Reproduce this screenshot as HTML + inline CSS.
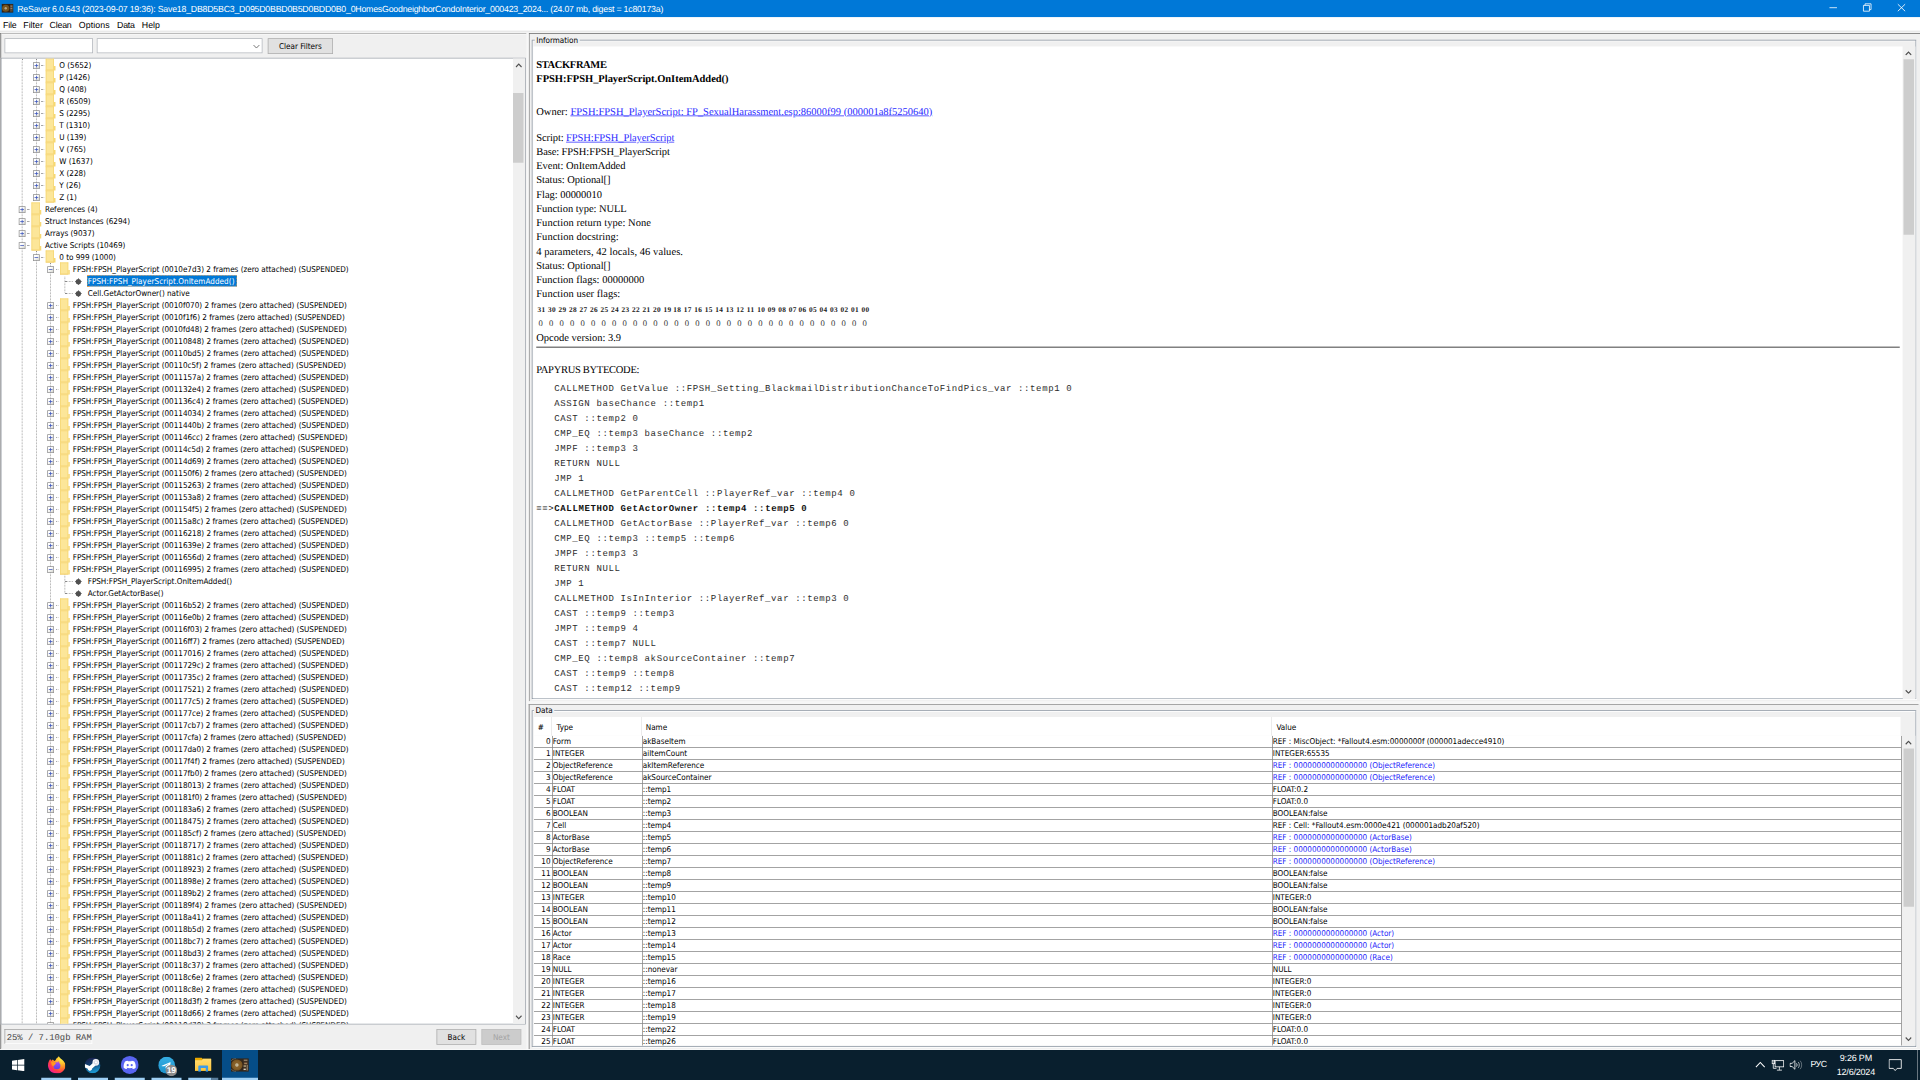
<!DOCTYPE html>
<html lang="en"><head><meta charset="utf-8"><title>ReSaver</title>
<style>

html,body{margin:0;padding:0;overflow:hidden;}
body{width:1920px;height:1080px;overflow:hidden;background:#f0f0f0;position:relative;}
#s{left:0;top:0;width:2560px;height:1440px;transform:scale(0.75);transform-origin:0 0;text-rendering:geometricPrecision;font-family:'DejaVu Sans Condensed','Liberation Sans',sans-serif;font-size:10.73px;color:#000;background:#f0f0f0;}
div,span,a{position:absolute;white-space:nowrap;box-sizing:border-box;}
.tah{font-family:'DejaVu Sans Condensed','Liberation Sans',sans-serif;font-size:10.73px;}
.seg{font-family:'Liberation Sans',sans-serif;}
.ser{font-family:'Liberation Serif',serif;font-size:14px;line-height:19px;height:19px;}
.mon{font-family:'Liberation Mono',monospace;font-size:12px;letter-spacing:0.83px;line-height:20px;height:20px;color:#2c2c2c;}
#titlebar{left:0;top:0;width:2560px;height:23px;background:#0078d7;}
#title{left:23px;top:1px;height:23px;line-height:23px;color:#fff;font-family:'Liberation Sans',sans-serif;font-size:11.73px;letter-spacing:-0.3px;}
#menubar{left:0;top:23px;width:2560px;height:19px;background:#fff;}
.mi{top:1px;height:19px;line-height:19px;font-family:'Liberation Sans',sans-serif;font-size:11.73px;letter-spacing:-0.27px;color:#000;}
.row{left:0;height:16px;line-height:16px;}
.row span.tx{top:0;height:16px;line-height:16px;}
.fold{width:11px;height:16px;background:#fce699;border:0.8px solid #f6d673;border-bottom:1.33px solid #eec452;}
.fold i{position:absolute;left:10px;top:9px;width:2px;height:6px;background:#f7d872;}
.box{width:9px;height:9px;border:1px solid #919191;background:linear-gradient(135deg,#fff 30%,#d8d8d0);}
.box i{position:absolute;left:1px;top:3px;width:5px;height:1px;background:#3b55bd;}
.box b{position:absolute;left:3px;top:1px;width:1px;height:5px;background:#3b55bd;}
.vl{width:0;border-left:1px dotted #8a8a8a;}
.hl{height:0;border-top:1px dotted #8a8a8a;}
.bul{width:7px;height:7px;border-radius:50%;background:#505050;}
.bul:before{content:"";position:absolute;left:3px;top:-1px;width:1px;height:9px;background:#505050;}
.bul:after{content:"";position:absolute;top:3px;left:-1px;height:1px;width:9px;background:#505050;}
.gl{left:712px;width:1823px;height:0;border-top:1.33px solid #848484;}
.cell{height:16px;line-height:16px;}
.blue{color:#2222fa;}
.btn{background:#e1e1e1;border:1px solid #adadad;text-align:center;}
</style></head><body><div id="s">
<div id="titlebar"><svg style="position:absolute;left:1.87px;top:5.2px;width:16px;height:12px" viewBox="0 0 12 9"><rect width="12" height="9" fill="#2e2217"/><circle cx="4.2" cy="4.5" r="3.6" fill="#73521f"/><circle cx="4.2" cy="4.5" r="1.2" fill="#b5a585"/><rect x="8.6" y="1" width="2.6" height="7" fill="#5a4a38"/><rect x="9" y="2" width="1.8" height="0.8" fill="#a09080"/><rect x="9" y="4.2" width="1.8" height="0.8" fill="#a09080"/></svg><span id="title">ReSaver 6.0.643 (2023-09-07 19:36): Save18_DB8D5BC3_D095D0BBD0B5D0BDD0B0_0HomesGoodneighborCondoInterior_000423_2024... (24.07 mb, digest = 1c80173a)</span><svg style="position:absolute;left:2426.67px;top:0;width:133.33px;height:22.67px" viewBox="0 0 100 17"><path d="M9.2 7.7H16.7" stroke="#fff" stroke-width="0.8" fill="none"/><path d="M43.2 5.4H49.2V11.2H43.2ZM44.8 5.4V3.8H50.8V9.6H49.2" stroke="#fff" stroke-width="0.8" fill="none"/><path d="M77.6 4.2L84.9 11.2M84.9 4.2L77.6 11.2" stroke="#fff" stroke-width="0.85" fill="none"/></svg></div>
<div id="menubar"><span class="mi" style="left:4px;letter-spacing:-0.2px">File</span><span class="mi" style="left:31px;letter-spacing:0.03px">Filter</span><span class="mi" style="left:66px;letter-spacing:-0.24px">Clean</span><span class="mi" style="left:105px;letter-spacing:0.13px">Options</span><span class="mi" style="left:156px;letter-spacing:-0.27px">Data</span><span class="mi" style="left:189px;letter-spacing:0.07px">Help</span></div>
<div style="left:0;top:41px;width:2560px;height:1px;background:#dadada"></div><div style="left:0;top:43px;width:2560px;height:1px;background:#f4f4f4"></div><div style="left:0;top:44px;width:702px;height:1px;background:#8e8e8e"></div><div style="left:0;top:45px;width:702px;height:1px;background:#fbfbfb"></div><div style="left:0;top:44px;width:1px;height:1355px;background:#6b6b6b"></div><div style="left:1px;top:45px;width:1px;height:1353px;background:#b9b9b9"></div><div style="left:705px;top:44px;width:1855px;height:1px;background:#696969"></div><div style="left:705px;top:44px;width:1px;height:891px;background:#696969"></div><div style="left:702px;top:44px;width:3px;height:1356px;background:#f7f7f7"></div><div style="left:6px;top:51px;width:118px;height:20px;background:#fff;border:1px solid #aeb2b8"></div><div style="left:129px;top:51px;width:221px;height:20px;background:#fff;border:1px solid #aeb2b8"><svg style="position:absolute;left:206.67px;top:6.67px;width:10.67px;height:6.67px" viewBox="0 0 8 5"><path d="M0.8 0.8L3.7 3.8L6.6 0.8" stroke="#555" stroke-width="0.8" fill="none"/></svg></div><div class="btn tah" style="left:357px;top:51px;width:87px;height:21px;line-height:19px">Clear Filters</div>
<div id="tree" style="left:1px;top:77px;width:700px;height:1289px;background:#fff;border:1px solid #9aa0a8;overflow:hidden"></div>
<div id="treeclip" style="left:2px;top:78px;width:682px;height:1287px;overflow:hidden"><div class="vl" style="left:27px;top:0px;height:1288px"></div><div class="vl" style="left:46px;top:0px;height:184px"></div><div class="vl" style="left:46px;top:256px;height:1032px"></div><div class="vl" style="left:65px;top:272px;height:1016px"></div><div class="vl" style="left:84px;top:288px;height:24px"></div><div class="vl" style="left:84px;top:688px;height:25px"></div><div class="row" style="top:1px"><div class="hl" style="left:53px;top:8px;width:4px;border-top-color:#a8a8a8"></div><div class="box" style="left:42px;top:4px"><i></i><b></b></div><div class="fold" style="left:59px;top:-1px"><i></i></div><span class="tx" style="left:77px">O (5652)</span></div>
<div class="row" style="top:17px"><div class="hl" style="left:53px;top:8px;width:4px;border-top-color:#a8a8a8"></div><div class="box" style="left:42px;top:4px"><i></i><b></b></div><div class="fold" style="left:59px;top:-1px"><i></i></div><span class="tx" style="left:77px">P (1426)</span></div>
<div class="row" style="top:33px"><div class="hl" style="left:53px;top:8px;width:4px;border-top-color:#a8a8a8"></div><div class="box" style="left:42px;top:4px"><i></i><b></b></div><div class="fold" style="left:59px;top:-1px"><i></i></div><span class="tx" style="left:77px">Q (408)</span></div>
<div class="row" style="top:49px"><div class="hl" style="left:53px;top:8px;width:4px;border-top-color:#a8a8a8"></div><div class="box" style="left:42px;top:4px"><i></i><b></b></div><div class="fold" style="left:59px;top:-1px"><i></i></div><span class="tx" style="left:77px">R (6509)</span></div>
<div class="row" style="top:65px"><div class="hl" style="left:53px;top:8px;width:4px;border-top-color:#a8a8a8"></div><div class="box" style="left:42px;top:4px"><i></i><b></b></div><div class="fold" style="left:59px;top:-1px"><i></i></div><span class="tx" style="left:77px">S (2295)</span></div>
<div class="row" style="top:81px"><div class="hl" style="left:53px;top:8px;width:4px;border-top-color:#a8a8a8"></div><div class="box" style="left:42px;top:4px"><i></i><b></b></div><div class="fold" style="left:59px;top:-1px"><i></i></div><span class="tx" style="left:77px">T (1310)</span></div>
<div class="row" style="top:97px"><div class="hl" style="left:53px;top:8px;width:4px;border-top-color:#a8a8a8"></div><div class="box" style="left:42px;top:4px"><i></i><b></b></div><div class="fold" style="left:59px;top:-1px"><i></i></div><span class="tx" style="left:77px">U (139)</span></div>
<div class="row" style="top:113px"><div class="hl" style="left:53px;top:8px;width:4px;border-top-color:#a8a8a8"></div><div class="box" style="left:42px;top:4px"><i></i><b></b></div><div class="fold" style="left:59px;top:-1px"><i></i></div><span class="tx" style="left:77px">V (765)</span></div>
<div class="row" style="top:129px"><div class="hl" style="left:53px;top:8px;width:4px;border-top-color:#a8a8a8"></div><div class="box" style="left:42px;top:4px"><i></i><b></b></div><div class="fold" style="left:59px;top:-1px"><i></i></div><span class="tx" style="left:77px">W (1637)</span></div>
<div class="row" style="top:145px"><div class="hl" style="left:53px;top:8px;width:4px;border-top-color:#a8a8a8"></div><div class="box" style="left:42px;top:4px"><i></i><b></b></div><div class="fold" style="left:59px;top:-1px"><i></i></div><span class="tx" style="left:77px">X (228)</span></div>
<div class="row" style="top:161px"><div class="hl" style="left:53px;top:8px;width:4px;border-top-color:#a8a8a8"></div><div class="box" style="left:42px;top:4px"><i></i><b></b></div><div class="fold" style="left:59px;top:-1px"><i></i></div><span class="tx" style="left:77px">Y (26)</span></div>
<div class="row" style="top:177px"><div class="hl" style="left:53px;top:8px;width:4px;border-top-color:#a8a8a8"></div><div class="box" style="left:42px;top:4px"><i></i><b></b></div><div class="fold" style="left:59px;top:-1px"><i></i></div><span class="tx" style="left:77px">Z (1)</span></div>
<div class="row" style="top:193px"><div class="hl" style="left:34px;top:8px;width:4px;border-top-color:#a8a8a8"></div><div class="box" style="left:23px;top:4px"><i></i><b></b></div><div class="fold" style="left:40px;top:-1px"><i></i></div><span class="tx" style="left:58px">References (4)</span></div>
<div class="row" style="top:209px"><div class="hl" style="left:34px;top:8px;width:4px;border-top-color:#a8a8a8"></div><div class="box" style="left:23px;top:4px"><i></i><b></b></div><div class="fold" style="left:40px;top:-1px"><i></i></div><span class="tx" style="left:58px">Struct Instances (6294)</span></div>
<div class="row" style="top:225px"><div class="hl" style="left:34px;top:8px;width:4px;border-top-color:#a8a8a8"></div><div class="box" style="left:23px;top:4px"><i></i><b></b></div><div class="fold" style="left:40px;top:-1px"><i></i></div><span class="tx" style="left:58px">Arrays (9037)</span></div>
<div class="row" style="top:241px"><div class="hl" style="left:34px;top:8px;width:4px;border-top-color:#a8a8a8"></div><div class="box" style="left:23px;top:4px"><i></i></div><div class="fold" style="left:40px;top:-1px"><i></i></div><span class="tx" style="left:58px">Active Scripts (10469)</span></div>
<div class="row" style="top:257px"><div class="hl" style="left:53px;top:8px;width:4px;border-top-color:#a8a8a8"></div><div class="box" style="left:42px;top:4px"><i></i></div><div class="fold" style="left:59px;top:-1px"><i></i></div><span class="tx" style="left:77px">0 to 999 (1000)</span></div>
<div class="row" style="top:273px"><div class="hl" style="left:72px;top:8px;width:4px;border-top-color:#a8a8a8"></div><div class="box" style="left:61px;top:4px"><i></i></div><div class="fold" style="left:78px;top:-1px"><i></i></div><span class="tx" style="left:95px">FPSH:FPSH_PlayerScript (0010e7d3) 2 frames (zero attached) (SUSPENDED)</span></div>
<div class="row" style="top:289px"><div class="hl" style="left:85px;top:8px;width:10px"></div><div class="bul" style="left:99px;top:5px"></div><span class="tx" style="left:114px;top:0px;height:15px;line-height:15px;width:200px;background:#0078d7;color:#fff;border:1px dotted #e8a050;padding-left:0;letter-spacing:0.09px">FPSH:FPSH_PlayerScript.OnItemAdded()</span></div>
<div class="row" style="top:305px"><div class="hl" style="left:85px;top:8px;width:10px"></div><div class="bul" style="left:99px;top:5px"></div><span class="tx" style="left:115px">Cell.GetActorOwner() native</span></div>
<div class="row" style="top:321px"><div class="hl" style="left:72px;top:8px;width:4px;border-top-color:#a8a8a8"></div><div class="box" style="left:61px;top:4px"><i></i><b></b></div><div class="fold" style="left:78px;top:-1px"><i></i></div><span class="tx" style="left:95px">FPSH:FPSH_PlayerScript (0010f070) 2 frames (zero attached) (SUSPENDED)</span></div>
<div class="row" style="top:337px"><div class="hl" style="left:72px;top:8px;width:4px;border-top-color:#a8a8a8"></div><div class="box" style="left:61px;top:4px"><i></i><b></b></div><div class="fold" style="left:78px;top:-1px"><i></i></div><span class="tx" style="left:95px">FPSH:FPSH_PlayerScript (0010f1f6) 2 frames (zero attached) (SUSPENDED)</span></div>
<div class="row" style="top:353px"><div class="hl" style="left:72px;top:8px;width:4px;border-top-color:#a8a8a8"></div><div class="box" style="left:61px;top:4px"><i></i><b></b></div><div class="fold" style="left:78px;top:-1px"><i></i></div><span class="tx" style="left:95px">FPSH:FPSH_PlayerScript (0010fd48) 2 frames (zero attached) (SUSPENDED)</span></div>
<div class="row" style="top:369px"><div class="hl" style="left:72px;top:8px;width:4px;border-top-color:#a8a8a8"></div><div class="box" style="left:61px;top:4px"><i></i><b></b></div><div class="fold" style="left:78px;top:-1px"><i></i></div><span class="tx" style="left:95px">FPSH:FPSH_PlayerScript (00110848) 2 frames (zero attached) (SUSPENDED)</span></div>
<div class="row" style="top:385px"><div class="hl" style="left:72px;top:8px;width:4px;border-top-color:#a8a8a8"></div><div class="box" style="left:61px;top:4px"><i></i><b></b></div><div class="fold" style="left:78px;top:-1px"><i></i></div><span class="tx" style="left:95px">FPSH:FPSH_PlayerScript (00110bd5) 2 frames (zero attached) (SUSPENDED)</span></div>
<div class="row" style="top:401px"><div class="hl" style="left:72px;top:8px;width:4px;border-top-color:#a8a8a8"></div><div class="box" style="left:61px;top:4px"><i></i><b></b></div><div class="fold" style="left:78px;top:-1px"><i></i></div><span class="tx" style="left:95px">FPSH:FPSH_PlayerScript (00110c5f) 2 frames (zero attached) (SUSPENDED)</span></div>
<div class="row" style="top:417px"><div class="hl" style="left:72px;top:8px;width:4px;border-top-color:#a8a8a8"></div><div class="box" style="left:61px;top:4px"><i></i><b></b></div><div class="fold" style="left:78px;top:-1px"><i></i></div><span class="tx" style="left:95px">FPSH:FPSH_PlayerScript (0011157a) 2 frames (zero attached) (SUSPENDED)</span></div>
<div class="row" style="top:433px"><div class="hl" style="left:72px;top:8px;width:4px;border-top-color:#a8a8a8"></div><div class="box" style="left:61px;top:4px"><i></i><b></b></div><div class="fold" style="left:78px;top:-1px"><i></i></div><span class="tx" style="left:95px">FPSH:FPSH_PlayerScript (001132e4) 2 frames (zero attached) (SUSPENDED)</span></div>
<div class="row" style="top:449px"><div class="hl" style="left:72px;top:8px;width:4px;border-top-color:#a8a8a8"></div><div class="box" style="left:61px;top:4px"><i></i><b></b></div><div class="fold" style="left:78px;top:-1px"><i></i></div><span class="tx" style="left:95px">FPSH:FPSH_PlayerScript (001136c4) 2 frames (zero attached) (SUSPENDED)</span></div>
<div class="row" style="top:465px"><div class="hl" style="left:72px;top:8px;width:4px;border-top-color:#a8a8a8"></div><div class="box" style="left:61px;top:4px"><i></i><b></b></div><div class="fold" style="left:78px;top:-1px"><i></i></div><span class="tx" style="left:95px">FPSH:FPSH_PlayerScript (00114034) 2 frames (zero attached) (SUSPENDED)</span></div>
<div class="row" style="top:481px"><div class="hl" style="left:72px;top:8px;width:4px;border-top-color:#a8a8a8"></div><div class="box" style="left:61px;top:4px"><i></i><b></b></div><div class="fold" style="left:78px;top:-1px"><i></i></div><span class="tx" style="left:95px">FPSH:FPSH_PlayerScript (0011440b) 2 frames (zero attached) (SUSPENDED)</span></div>
<div class="row" style="top:497px"><div class="hl" style="left:72px;top:8px;width:4px;border-top-color:#a8a8a8"></div><div class="box" style="left:61px;top:4px"><i></i><b></b></div><div class="fold" style="left:78px;top:-1px"><i></i></div><span class="tx" style="left:95px">FPSH:FPSH_PlayerScript (001146cc) 2 frames (zero attached) (SUSPENDED)</span></div>
<div class="row" style="top:513px"><div class="hl" style="left:72px;top:8px;width:4px;border-top-color:#a8a8a8"></div><div class="box" style="left:61px;top:4px"><i></i><b></b></div><div class="fold" style="left:78px;top:-1px"><i></i></div><span class="tx" style="left:95px">FPSH:FPSH_PlayerScript (00114c5d) 2 frames (zero attached) (SUSPENDED)</span></div>
<div class="row" style="top:529px"><div class="hl" style="left:72px;top:8px;width:4px;border-top-color:#a8a8a8"></div><div class="box" style="left:61px;top:4px"><i></i><b></b></div><div class="fold" style="left:78px;top:-1px"><i></i></div><span class="tx" style="left:95px">FPSH:FPSH_PlayerScript (00114d69) 2 frames (zero attached) (SUSPENDED)</span></div>
<div class="row" style="top:545px"><div class="hl" style="left:72px;top:8px;width:4px;border-top-color:#a8a8a8"></div><div class="box" style="left:61px;top:4px"><i></i><b></b></div><div class="fold" style="left:78px;top:-1px"><i></i></div><span class="tx" style="left:95px">FPSH:FPSH_PlayerScript (001150f6) 2 frames (zero attached) (SUSPENDED)</span></div>
<div class="row" style="top:561px"><div class="hl" style="left:72px;top:8px;width:4px;border-top-color:#a8a8a8"></div><div class="box" style="left:61px;top:4px"><i></i><b></b></div><div class="fold" style="left:78px;top:-1px"><i></i></div><span class="tx" style="left:95px">FPSH:FPSH_PlayerScript (00115263) 2 frames (zero attached) (SUSPENDED)</span></div>
<div class="row" style="top:577px"><div class="hl" style="left:72px;top:8px;width:4px;border-top-color:#a8a8a8"></div><div class="box" style="left:61px;top:4px"><i></i><b></b></div><div class="fold" style="left:78px;top:-1px"><i></i></div><span class="tx" style="left:95px">FPSH:FPSH_PlayerScript (001153a8) 2 frames (zero attached) (SUSPENDED)</span></div>
<div class="row" style="top:593px"><div class="hl" style="left:72px;top:8px;width:4px;border-top-color:#a8a8a8"></div><div class="box" style="left:61px;top:4px"><i></i><b></b></div><div class="fold" style="left:78px;top:-1px"><i></i></div><span class="tx" style="left:95px">FPSH:FPSH_PlayerScript (001154f5) 2 frames (zero attached) (SUSPENDED)</span></div>
<div class="row" style="top:609px"><div class="hl" style="left:72px;top:8px;width:4px;border-top-color:#a8a8a8"></div><div class="box" style="left:61px;top:4px"><i></i><b></b></div><div class="fold" style="left:78px;top:-1px"><i></i></div><span class="tx" style="left:95px">FPSH:FPSH_PlayerScript (00115a8c) 2 frames (zero attached) (SUSPENDED)</span></div>
<div class="row" style="top:625px"><div class="hl" style="left:72px;top:8px;width:4px;border-top-color:#a8a8a8"></div><div class="box" style="left:61px;top:4px"><i></i><b></b></div><div class="fold" style="left:78px;top:-1px"><i></i></div><span class="tx" style="left:95px">FPSH:FPSH_PlayerScript (00116218) 2 frames (zero attached) (SUSPENDED)</span></div>
<div class="row" style="top:641px"><div class="hl" style="left:72px;top:8px;width:4px;border-top-color:#a8a8a8"></div><div class="box" style="left:61px;top:4px"><i></i><b></b></div><div class="fold" style="left:78px;top:-1px"><i></i></div><span class="tx" style="left:95px">FPSH:FPSH_PlayerScript (0011639e) 2 frames (zero attached) (SUSPENDED)</span></div>
<div class="row" style="top:657px"><div class="hl" style="left:72px;top:8px;width:4px;border-top-color:#a8a8a8"></div><div class="box" style="left:61px;top:4px"><i></i><b></b></div><div class="fold" style="left:78px;top:-1px"><i></i></div><span class="tx" style="left:95px">FPSH:FPSH_PlayerScript (0011656d) 2 frames (zero attached) (SUSPENDED)</span></div>
<div class="row" style="top:673px"><div class="hl" style="left:72px;top:8px;width:4px;border-top-color:#a8a8a8"></div><div class="box" style="left:61px;top:4px"><i></i></div><div class="fold" style="left:78px;top:-1px"><i></i></div><span class="tx" style="left:95px">FPSH:FPSH_PlayerScript (00116995) 2 frames (zero attached) (SUSPENDED)</span></div>
<div class="row" style="top:689px"><div class="hl" style="left:85px;top:8px;width:10px"></div><div class="bul" style="left:99px;top:5px"></div><span class="tx" style="left:115px">FPSH:FPSH_PlayerScript.OnItemAdded()</span></div>
<div class="row" style="top:705px"><div class="hl" style="left:85px;top:8px;width:10px"></div><div class="bul" style="left:99px;top:5px"></div><span class="tx" style="left:115px">Actor.GetActorBase()</span></div>
<div class="row" style="top:721px"><div class="hl" style="left:72px;top:8px;width:4px;border-top-color:#a8a8a8"></div><div class="box" style="left:61px;top:4px"><i></i><b></b></div><div class="fold" style="left:78px;top:-1px"><i></i></div><span class="tx" style="left:95px">FPSH:FPSH_PlayerScript (00116b52) 2 frames (zero attached) (SUSPENDED)</span></div>
<div class="row" style="top:737px"><div class="hl" style="left:72px;top:8px;width:4px;border-top-color:#a8a8a8"></div><div class="box" style="left:61px;top:4px"><i></i><b></b></div><div class="fold" style="left:78px;top:-1px"><i></i></div><span class="tx" style="left:95px">FPSH:FPSH_PlayerScript (00116e0b) 2 frames (zero attached) (SUSPENDED)</span></div>
<div class="row" style="top:753px"><div class="hl" style="left:72px;top:8px;width:4px;border-top-color:#a8a8a8"></div><div class="box" style="left:61px;top:4px"><i></i><b></b></div><div class="fold" style="left:78px;top:-1px"><i></i></div><span class="tx" style="left:95px">FPSH:FPSH_PlayerScript (00116f03) 2 frames (zero attached) (SUSPENDED)</span></div>
<div class="row" style="top:769px"><div class="hl" style="left:72px;top:8px;width:4px;border-top-color:#a8a8a8"></div><div class="box" style="left:61px;top:4px"><i></i><b></b></div><div class="fold" style="left:78px;top:-1px"><i></i></div><span class="tx" style="left:95px">FPSH:FPSH_PlayerScript (00116ff7) 2 frames (zero attached) (SUSPENDED)</span></div>
<div class="row" style="top:785px"><div class="hl" style="left:72px;top:8px;width:4px;border-top-color:#a8a8a8"></div><div class="box" style="left:61px;top:4px"><i></i><b></b></div><div class="fold" style="left:78px;top:-1px"><i></i></div><span class="tx" style="left:95px">FPSH:FPSH_PlayerScript (00117016) 2 frames (zero attached) (SUSPENDED)</span></div>
<div class="row" style="top:801px"><div class="hl" style="left:72px;top:8px;width:4px;border-top-color:#a8a8a8"></div><div class="box" style="left:61px;top:4px"><i></i><b></b></div><div class="fold" style="left:78px;top:-1px"><i></i></div><span class="tx" style="left:95px">FPSH:FPSH_PlayerScript (0011729c) 2 frames (zero attached) (SUSPENDED)</span></div>
<div class="row" style="top:817px"><div class="hl" style="left:72px;top:8px;width:4px;border-top-color:#a8a8a8"></div><div class="box" style="left:61px;top:4px"><i></i><b></b></div><div class="fold" style="left:78px;top:-1px"><i></i></div><span class="tx" style="left:95px">FPSH:FPSH_PlayerScript (0011735c) 2 frames (zero attached) (SUSPENDED)</span></div>
<div class="row" style="top:833px"><div class="hl" style="left:72px;top:8px;width:4px;border-top-color:#a8a8a8"></div><div class="box" style="left:61px;top:4px"><i></i><b></b></div><div class="fold" style="left:78px;top:-1px"><i></i></div><span class="tx" style="left:95px">FPSH:FPSH_PlayerScript (00117521) 2 frames (zero attached) (SUSPENDED)</span></div>
<div class="row" style="top:849px"><div class="hl" style="left:72px;top:8px;width:4px;border-top-color:#a8a8a8"></div><div class="box" style="left:61px;top:4px"><i></i><b></b></div><div class="fold" style="left:78px;top:-1px"><i></i></div><span class="tx" style="left:95px">FPSH:FPSH_PlayerScript (001177c5) 2 frames (zero attached) (SUSPENDED)</span></div>
<div class="row" style="top:865px"><div class="hl" style="left:72px;top:8px;width:4px;border-top-color:#a8a8a8"></div><div class="box" style="left:61px;top:4px"><i></i><b></b></div><div class="fold" style="left:78px;top:-1px"><i></i></div><span class="tx" style="left:95px">FPSH:FPSH_PlayerScript (001177ce) 2 frames (zero attached) (SUSPENDED)</span></div>
<div class="row" style="top:881px"><div class="hl" style="left:72px;top:8px;width:4px;border-top-color:#a8a8a8"></div><div class="box" style="left:61px;top:4px"><i></i><b></b></div><div class="fold" style="left:78px;top:-1px"><i></i></div><span class="tx" style="left:95px">FPSH:FPSH_PlayerScript (00117cb7) 2 frames (zero attached) (SUSPENDED)</span></div>
<div class="row" style="top:897px"><div class="hl" style="left:72px;top:8px;width:4px;border-top-color:#a8a8a8"></div><div class="box" style="left:61px;top:4px"><i></i><b></b></div><div class="fold" style="left:78px;top:-1px"><i></i></div><span class="tx" style="left:95px">FPSH:FPSH_PlayerScript (00117cfa) 2 frames (zero attached) (SUSPENDED)</span></div>
<div class="row" style="top:913px"><div class="hl" style="left:72px;top:8px;width:4px;border-top-color:#a8a8a8"></div><div class="box" style="left:61px;top:4px"><i></i><b></b></div><div class="fold" style="left:78px;top:-1px"><i></i></div><span class="tx" style="left:95px">FPSH:FPSH_PlayerScript (00117da0) 2 frames (zero attached) (SUSPENDED)</span></div>
<div class="row" style="top:929px"><div class="hl" style="left:72px;top:8px;width:4px;border-top-color:#a8a8a8"></div><div class="box" style="left:61px;top:4px"><i></i><b></b></div><div class="fold" style="left:78px;top:-1px"><i></i></div><span class="tx" style="left:95px">FPSH:FPSH_PlayerScript (00117f4f) 2 frames (zero attached) (SUSPENDED)</span></div>
<div class="row" style="top:945px"><div class="hl" style="left:72px;top:8px;width:4px;border-top-color:#a8a8a8"></div><div class="box" style="left:61px;top:4px"><i></i><b></b></div><div class="fold" style="left:78px;top:-1px"><i></i></div><span class="tx" style="left:95px">FPSH:FPSH_PlayerScript (00117fb0) 2 frames (zero attached) (SUSPENDED)</span></div>
<div class="row" style="top:961px"><div class="hl" style="left:72px;top:8px;width:4px;border-top-color:#a8a8a8"></div><div class="box" style="left:61px;top:4px"><i></i><b></b></div><div class="fold" style="left:78px;top:-1px"><i></i></div><span class="tx" style="left:95px">FPSH:FPSH_PlayerScript (00118013) 2 frames (zero attached) (SUSPENDED)</span></div>
<div class="row" style="top:977px"><div class="hl" style="left:72px;top:8px;width:4px;border-top-color:#a8a8a8"></div><div class="box" style="left:61px;top:4px"><i></i><b></b></div><div class="fold" style="left:78px;top:-1px"><i></i></div><span class="tx" style="left:95px">FPSH:FPSH_PlayerScript (001181f0) 2 frames (zero attached) (SUSPENDED)</span></div>
<div class="row" style="top:993px"><div class="hl" style="left:72px;top:8px;width:4px;border-top-color:#a8a8a8"></div><div class="box" style="left:61px;top:4px"><i></i><b></b></div><div class="fold" style="left:78px;top:-1px"><i></i></div><span class="tx" style="left:95px">FPSH:FPSH_PlayerScript (001183a6) 2 frames (zero attached) (SUSPENDED)</span></div>
<div class="row" style="top:1009px"><div class="hl" style="left:72px;top:8px;width:4px;border-top-color:#a8a8a8"></div><div class="box" style="left:61px;top:4px"><i></i><b></b></div><div class="fold" style="left:78px;top:-1px"><i></i></div><span class="tx" style="left:95px">FPSH:FPSH_PlayerScript (00118475) 2 frames (zero attached) (SUSPENDED)</span></div>
<div class="row" style="top:1025px"><div class="hl" style="left:72px;top:8px;width:4px;border-top-color:#a8a8a8"></div><div class="box" style="left:61px;top:4px"><i></i><b></b></div><div class="fold" style="left:78px;top:-1px"><i></i></div><span class="tx" style="left:95px">FPSH:FPSH_PlayerScript (001185cf) 2 frames (zero attached) (SUSPENDED)</span></div>
<div class="row" style="top:1041px"><div class="hl" style="left:72px;top:8px;width:4px;border-top-color:#a8a8a8"></div><div class="box" style="left:61px;top:4px"><i></i><b></b></div><div class="fold" style="left:78px;top:-1px"><i></i></div><span class="tx" style="left:95px">FPSH:FPSH_PlayerScript (00118717) 2 frames (zero attached) (SUSPENDED)</span></div>
<div class="row" style="top:1057px"><div class="hl" style="left:72px;top:8px;width:4px;border-top-color:#a8a8a8"></div><div class="box" style="left:61px;top:4px"><i></i><b></b></div><div class="fold" style="left:78px;top:-1px"><i></i></div><span class="tx" style="left:95px">FPSH:FPSH_PlayerScript (0011881c) 2 frames (zero attached) (SUSPENDED)</span></div>
<div class="row" style="top:1073px"><div class="hl" style="left:72px;top:8px;width:4px;border-top-color:#a8a8a8"></div><div class="box" style="left:61px;top:4px"><i></i><b></b></div><div class="fold" style="left:78px;top:-1px"><i></i></div><span class="tx" style="left:95px">FPSH:FPSH_PlayerScript (00118923) 2 frames (zero attached) (SUSPENDED)</span></div>
<div class="row" style="top:1089px"><div class="hl" style="left:72px;top:8px;width:4px;border-top-color:#a8a8a8"></div><div class="box" style="left:61px;top:4px"><i></i><b></b></div><div class="fold" style="left:78px;top:-1px"><i></i></div><span class="tx" style="left:95px">FPSH:FPSH_PlayerScript (0011898e) 2 frames (zero attached) (SUSPENDED)</span></div>
<div class="row" style="top:1105px"><div class="hl" style="left:72px;top:8px;width:4px;border-top-color:#a8a8a8"></div><div class="box" style="left:61px;top:4px"><i></i><b></b></div><div class="fold" style="left:78px;top:-1px"><i></i></div><span class="tx" style="left:95px">FPSH:FPSH_PlayerScript (001189b2) 2 frames (zero attached) (SUSPENDED)</span></div>
<div class="row" style="top:1121px"><div class="hl" style="left:72px;top:8px;width:4px;border-top-color:#a8a8a8"></div><div class="box" style="left:61px;top:4px"><i></i><b></b></div><div class="fold" style="left:78px;top:-1px"><i></i></div><span class="tx" style="left:95px">FPSH:FPSH_PlayerScript (001189f4) 2 frames (zero attached) (SUSPENDED)</span></div>
<div class="row" style="top:1137px"><div class="hl" style="left:72px;top:8px;width:4px;border-top-color:#a8a8a8"></div><div class="box" style="left:61px;top:4px"><i></i><b></b></div><div class="fold" style="left:78px;top:-1px"><i></i></div><span class="tx" style="left:95px">FPSH:FPSH_PlayerScript (00118a41) 2 frames (zero attached) (SUSPENDED)</span></div>
<div class="row" style="top:1153px"><div class="hl" style="left:72px;top:8px;width:4px;border-top-color:#a8a8a8"></div><div class="box" style="left:61px;top:4px"><i></i><b></b></div><div class="fold" style="left:78px;top:-1px"><i></i></div><span class="tx" style="left:95px">FPSH:FPSH_PlayerScript (00118b5d) 2 frames (zero attached) (SUSPENDED)</span></div>
<div class="row" style="top:1169px"><div class="hl" style="left:72px;top:8px;width:4px;border-top-color:#a8a8a8"></div><div class="box" style="left:61px;top:4px"><i></i><b></b></div><div class="fold" style="left:78px;top:-1px"><i></i></div><span class="tx" style="left:95px">FPSH:FPSH_PlayerScript (00118bc7) 2 frames (zero attached) (SUSPENDED)</span></div>
<div class="row" style="top:1185px"><div class="hl" style="left:72px;top:8px;width:4px;border-top-color:#a8a8a8"></div><div class="box" style="left:61px;top:4px"><i></i><b></b></div><div class="fold" style="left:78px;top:-1px"><i></i></div><span class="tx" style="left:95px">FPSH:FPSH_PlayerScript (00118bd3) 2 frames (zero attached) (SUSPENDED)</span></div>
<div class="row" style="top:1201px"><div class="hl" style="left:72px;top:8px;width:4px;border-top-color:#a8a8a8"></div><div class="box" style="left:61px;top:4px"><i></i><b></b></div><div class="fold" style="left:78px;top:-1px"><i></i></div><span class="tx" style="left:95px">FPSH:FPSH_PlayerScript (00118c37) 2 frames (zero attached) (SUSPENDED)</span></div>
<div class="row" style="top:1217px"><div class="hl" style="left:72px;top:8px;width:4px;border-top-color:#a8a8a8"></div><div class="box" style="left:61px;top:4px"><i></i><b></b></div><div class="fold" style="left:78px;top:-1px"><i></i></div><span class="tx" style="left:95px">FPSH:FPSH_PlayerScript (00118c6e) 2 frames (zero attached) (SUSPENDED)</span></div>
<div class="row" style="top:1233px"><div class="hl" style="left:72px;top:8px;width:4px;border-top-color:#a8a8a8"></div><div class="box" style="left:61px;top:4px"><i></i><b></b></div><div class="fold" style="left:78px;top:-1px"><i></i></div><span class="tx" style="left:95px">FPSH:FPSH_PlayerScript (00118c8e) 2 frames (zero attached) (SUSPENDED)</span></div>
<div class="row" style="top:1249px"><div class="hl" style="left:72px;top:8px;width:4px;border-top-color:#a8a8a8"></div><div class="box" style="left:61px;top:4px"><i></i><b></b></div><div class="fold" style="left:78px;top:-1px"><i></i></div><span class="tx" style="left:95px">FPSH:FPSH_PlayerScript (00118d3f) 2 frames (zero attached) (SUSPENDED)</span></div>
<div class="row" style="top:1265px"><div class="hl" style="left:72px;top:8px;width:4px;border-top-color:#a8a8a8"></div><div class="box" style="left:61px;top:4px"><i></i><b></b></div><div class="fold" style="left:78px;top:-1px"><i></i></div><span class="tx" style="left:95px">FPSH:FPSH_PlayerScript (00118d66) 2 frames (zero attached) (SUSPENDED)</span></div>
<div class="row" style="top:1281px"><div class="hl" style="left:72px;top:8px;width:4px;border-top-color:#a8a8a8"></div><div class="box" style="left:61px;top:4px"><i></i><b></b></div><div class="fold" style="left:78px;top:-1px"><i></i></div><span class="tx" style="left:95px">FPSH:FPSH_PlayerScript (00118d78) 2 frames (zero attached) (SUSPENDED)</span></div>
</div>
<div style="left:684px;top:78px;width:16px;height:1287px;background:#f0f0f0"><svg style="position:absolute;left:2.67px;top:6.27px;width:9.33px;height:6.67px" viewBox="0 0 7 5"><path d="M0.7 4L3.5 1.1L6.3 4" stroke="#505050" stroke-width="1.1" fill="none"/></svg><div style="left:0;top:46px;width:14px;height:93px;background:#cdcdcd"></div><svg style="position:absolute;left:2.67px;top:1274.93px;width:9.33px;height:6.67px" viewBox="0 0 7 5"><path d="M0.7 1L3.5 3.9L6.3 1" stroke="#505050" stroke-width="1.1" fill="none"/></svg></div>
<div style="left:6px;top:1372px;width:117px;height:20px;border-top:1.33px solid #a0a0a0;border-left:1.33px solid #a0a0a0;border-bottom:1.33px solid #fff;border-right:1.33px solid #fff;"></div><span style="left:9px;top:1373px;height:20px;line-height:21px;font-family:'Liberation Mono',monospace;font-size:11.8px;color:#454545">25% / 7.10gb RAM</span><div class="btn tah" style="left:582px;top:1372px;width:53px;height:21px;line-height:19px">Back</div><div class="btn tah" style="left:642px;top:1372px;width:53px;height:21px;line-height:19px;background:#cccccc;border-color:#bfbfbf;color:#a2a2a2">Next</div>
<div style="left:709px;top:53px;width:1846px;height:879px;border:1px solid #8e98a4;box-shadow:1px 1px 0 #fff, inset 1px 1px 0 #fff"></div><div style="left:713px;top:52px;width:60px;height:4px;background:#f0f0f0"></div><span class="tah" style="left:715px;top:46px;height:16px;line-height:16px">Information</span><div id="info" style="left:711px;top:62px;width:1826px;height:869px;background:#fff;overflow:hidden"></div><div style="left:2537px;top:62px;width:17px;height:870px;background:#f0f0f0"><svg style="position:absolute;left:2.8px;top:5.73px;width:9.33px;height:6.67px" viewBox="0 0 7 5"><path d="M0.7 4L3.5 1.1L6.3 4" stroke="#505050" stroke-width="1.1" fill="none"/></svg><div style="left:1px;top:17px;width:14px;height:234px;background:#cdcdcd"></div><svg style="position:absolute;left:2.8px;top:856.8px;width:9.33px;height:6.67px" viewBox="0 0 7 5"><path d="M0.7 1L3.5 3.9L6.3 1" stroke="#505050" stroke-width="1.1" fill="none"/></svg></div>
<div class="ser" style="left:715px;top:77.467px;"><b style="position:static;letter-spacing:-0.48px">STACKFRAME</b></div>
<div class="ser" style="left:715px;top:96.133px;"><b style="position:static;letter-spacing:-0.04px">FPSH:FPSH_PlayerScript.OnItemAdded()</b></div>
<div class="ser" style="left:715px;top:140.133px;">Owner: <a style="color:#2a2aff;text-decoration:underline;position:static">FPSH:FPSH_PlayerScript: FP_SexualHarassment.esp:86000f99 (000001a8f5250640)</a></div>
<div class="ser" style="left:715px;top:174.800px;letter-spacing:-0.13px">Script: <a style="color:#2a2aff;text-decoration:underline;position:static">FPSH:FPSH_PlayerScript</a></div>
<div class="ser" style="left:715px;top:193.467px;letter-spacing:-0.13px">Base: FPSH:FPSH_PlayerScript</div>
<div class="ser" style="left:715px;top:212.133px;letter-spacing:-0.07px">Event: OnItemAdded</div>
<div class="ser" style="left:715px;top:230.800px;letter-spacing:-0.05px">Status: Optional[]</div>
<div class="ser" style="left:715px;top:250.800px;letter-spacing:-0.05px">Flag: 00000010</div>
<div class="ser" style="left:715px;top:269.467px;letter-spacing:-0.08px">Function type: NULL</div>
<div class="ser" style="left:715px;top:288.133px;letter-spacing:0.03px">Function return type: None</div>
<div class="ser" style="left:715px;top:306.800px;letter-spacing:0.03px">Function docstring:</div>
<div class="ser" style="left:715px;top:326.800px;letter-spacing:0.08px">4 parameters, 42 locals, 46 values.</div>
<div class="ser" style="left:715px;top:345.467px;letter-spacing:-0.05px">Status: Optional[]</div>
<div class="ser" style="left:715px;top:364.133px;letter-spacing:0px">Function flags: 00000000</div>
<div class="ser" style="left:715px;top:382.800px;letter-spacing:0.04px">Function user flags:</div>
<span style="left:715px;top:407.3px;width:14px;height:14px;line-height:14px;font-family:'Liberation Serif',serif;font-size:9.73px;letter-spacing:0.6px;font-weight:bold;text-align:center;color:#222">31</span><span style="left:714px;top:423px;width:14px;height:16px;line-height:16px;font-family:'Liberation Serif',serif;font-size:11.47px;text-align:center;color:#333">0</span><span style="left:729px;top:407.3px;width:14px;height:14px;line-height:14px;font-family:'Liberation Serif',serif;font-size:9.73px;letter-spacing:0.6px;font-weight:bold;text-align:center;color:#222">30</span><span style="left:728px;top:423px;width:14px;height:16px;line-height:16px;font-family:'Liberation Serif',serif;font-size:11.47px;text-align:center;color:#333">0</span><span style="left:743px;top:407.3px;width:14px;height:14px;line-height:14px;font-family:'Liberation Serif',serif;font-size:9.73px;letter-spacing:0.6px;font-weight:bold;text-align:center;color:#222">29</span><span style="left:742px;top:423px;width:14px;height:16px;line-height:16px;font-family:'Liberation Serif',serif;font-size:11.47px;text-align:center;color:#333">0</span><span style="left:757px;top:407.3px;width:14px;height:14px;line-height:14px;font-family:'Liberation Serif',serif;font-size:9.73px;letter-spacing:0.6px;font-weight:bold;text-align:center;color:#222">28</span><span style="left:756px;top:423px;width:14px;height:16px;line-height:16px;font-family:'Liberation Serif',serif;font-size:11.47px;text-align:center;color:#333">0</span><span style="left:771px;top:407.3px;width:14px;height:14px;line-height:14px;font-family:'Liberation Serif',serif;font-size:9.73px;letter-spacing:0.6px;font-weight:bold;text-align:center;color:#222">27</span><span style="left:770px;top:423px;width:14px;height:16px;line-height:16px;font-family:'Liberation Serif',serif;font-size:11.47px;text-align:center;color:#333">0</span><span style="left:785px;top:407.3px;width:14px;height:14px;line-height:14px;font-family:'Liberation Serif',serif;font-size:9.73px;letter-spacing:0.6px;font-weight:bold;text-align:center;color:#222">26</span><span style="left:784px;top:423px;width:14px;height:16px;line-height:16px;font-family:'Liberation Serif',serif;font-size:11.47px;text-align:center;color:#333">0</span><span style="left:799px;top:407.3px;width:14px;height:14px;line-height:14px;font-family:'Liberation Serif',serif;font-size:9.73px;letter-spacing:0.6px;font-weight:bold;text-align:center;color:#222">25</span><span style="left:798px;top:423px;width:14px;height:16px;line-height:16px;font-family:'Liberation Serif',serif;font-size:11.47px;text-align:center;color:#333">0</span><span style="left:813px;top:407.3px;width:14px;height:14px;line-height:14px;font-family:'Liberation Serif',serif;font-size:9.73px;letter-spacing:0.6px;font-weight:bold;text-align:center;color:#222">24</span><span style="left:812px;top:423px;width:14px;height:16px;line-height:16px;font-family:'Liberation Serif',serif;font-size:11.47px;text-align:center;color:#333">0</span><span style="left:827px;top:407.3px;width:14px;height:14px;line-height:14px;font-family:'Liberation Serif',serif;font-size:9.73px;letter-spacing:0.6px;font-weight:bold;text-align:center;color:#222">23</span><span style="left:826px;top:423px;width:14px;height:16px;line-height:16px;font-family:'Liberation Serif',serif;font-size:11.47px;text-align:center;color:#333">0</span><span style="left:841px;top:407.3px;width:14px;height:14px;line-height:14px;font-family:'Liberation Serif',serif;font-size:9.73px;letter-spacing:0.6px;font-weight:bold;text-align:center;color:#222">22</span><span style="left:840px;top:423px;width:14px;height:16px;line-height:16px;font-family:'Liberation Serif',serif;font-size:11.47px;text-align:center;color:#333">0</span><span style="left:855px;top:407.3px;width:14px;height:14px;line-height:14px;font-family:'Liberation Serif',serif;font-size:9.73px;letter-spacing:0.6px;font-weight:bold;text-align:center;color:#222">21</span><span style="left:853px;top:423px;width:14px;height:16px;line-height:16px;font-family:'Liberation Serif',serif;font-size:11.47px;text-align:center;color:#333">0</span><span style="left:869px;top:407.3px;width:14px;height:14px;line-height:14px;font-family:'Liberation Serif',serif;font-size:9.73px;letter-spacing:0.6px;font-weight:bold;text-align:center;color:#222">20</span><span style="left:867px;top:423px;width:14px;height:16px;line-height:16px;font-family:'Liberation Serif',serif;font-size:11.47px;text-align:center;color:#333">0</span><span style="left:883px;top:407.3px;width:14px;height:14px;line-height:14px;font-family:'Liberation Serif',serif;font-size:9.73px;letter-spacing:0.6px;font-weight:bold;text-align:center;color:#222">19</span><span style="left:881px;top:423px;width:14px;height:16px;line-height:16px;font-family:'Liberation Serif',serif;font-size:11.47px;text-align:center;color:#333">0</span><span style="left:896px;top:407.3px;width:14px;height:14px;line-height:14px;font-family:'Liberation Serif',serif;font-size:9.73px;letter-spacing:0.6px;font-weight:bold;text-align:center;color:#222">18</span><span style="left:895px;top:423px;width:14px;height:16px;line-height:16px;font-family:'Liberation Serif',serif;font-size:11.47px;text-align:center;color:#333">0</span><span style="left:910px;top:407.3px;width:14px;height:14px;line-height:14px;font-family:'Liberation Serif',serif;font-size:9.73px;letter-spacing:0.6px;font-weight:bold;text-align:center;color:#222">17</span><span style="left:909px;top:423px;width:14px;height:16px;line-height:16px;font-family:'Liberation Serif',serif;font-size:11.47px;text-align:center;color:#333">0</span><span style="left:924px;top:407.3px;width:14px;height:14px;line-height:14px;font-family:'Liberation Serif',serif;font-size:9.73px;letter-spacing:0.6px;font-weight:bold;text-align:center;color:#222">16</span><span style="left:923px;top:423px;width:14px;height:16px;line-height:16px;font-family:'Liberation Serif',serif;font-size:11.47px;text-align:center;color:#333">0</span><span style="left:938px;top:407.3px;width:14px;height:14px;line-height:14px;font-family:'Liberation Serif',serif;font-size:9.73px;letter-spacing:0.6px;font-weight:bold;text-align:center;color:#222">15</span><span style="left:937px;top:423px;width:14px;height:16px;line-height:16px;font-family:'Liberation Serif',serif;font-size:11.47px;text-align:center;color:#333">0</span><span style="left:952px;top:407.3px;width:14px;height:14px;line-height:14px;font-family:'Liberation Serif',serif;font-size:9.73px;letter-spacing:0.6px;font-weight:bold;text-align:center;color:#222">14</span><span style="left:951px;top:423px;width:14px;height:16px;line-height:16px;font-family:'Liberation Serif',serif;font-size:11.47px;text-align:center;color:#333">0</span><span style="left:966px;top:407.3px;width:14px;height:14px;line-height:14px;font-family:'Liberation Serif',serif;font-size:9.73px;letter-spacing:0.6px;font-weight:bold;text-align:center;color:#222">13</span><span style="left:965px;top:423px;width:14px;height:16px;line-height:16px;font-family:'Liberation Serif',serif;font-size:11.47px;text-align:center;color:#333">0</span><span style="left:980px;top:407.3px;width:14px;height:14px;line-height:14px;font-family:'Liberation Serif',serif;font-size:9.73px;letter-spacing:0.6px;font-weight:bold;text-align:center;color:#222">12</span><span style="left:979px;top:423px;width:14px;height:16px;line-height:16px;font-family:'Liberation Serif',serif;font-size:11.47px;text-align:center;color:#333">0</span><span style="left:994px;top:407.3px;width:14px;height:14px;line-height:14px;font-family:'Liberation Serif',serif;font-size:9.73px;letter-spacing:0.6px;font-weight:bold;text-align:center;color:#222">11</span><span style="left:993px;top:423px;width:14px;height:16px;line-height:16px;font-family:'Liberation Serif',serif;font-size:11.47px;text-align:center;color:#333">0</span><span style="left:1008px;top:407.3px;width:14px;height:14px;line-height:14px;font-family:'Liberation Serif',serif;font-size:9.73px;letter-spacing:0.6px;font-weight:bold;text-align:center;color:#222">10</span><span style="left:1007px;top:423px;width:14px;height:16px;line-height:16px;font-family:'Liberation Serif',serif;font-size:11.47px;text-align:center;color:#333">0</span><span style="left:1022px;top:407.3px;width:14px;height:14px;line-height:14px;font-family:'Liberation Serif',serif;font-size:9.73px;letter-spacing:0.6px;font-weight:bold;text-align:center;color:#222">09</span><span style="left:1021px;top:423px;width:14px;height:16px;line-height:16px;font-family:'Liberation Serif',serif;font-size:11.47px;text-align:center;color:#333">0</span><span style="left:1036px;top:407.3px;width:14px;height:14px;line-height:14px;font-family:'Liberation Serif',serif;font-size:9.73px;letter-spacing:0.6px;font-weight:bold;text-align:center;color:#222">08</span><span style="left:1034px;top:423px;width:14px;height:16px;line-height:16px;font-family:'Liberation Serif',serif;font-size:11.47px;text-align:center;color:#333">0</span><span style="left:1050px;top:407.3px;width:14px;height:14px;line-height:14px;font-family:'Liberation Serif',serif;font-size:9.73px;letter-spacing:0.6px;font-weight:bold;text-align:center;color:#222">07</span><span style="left:1048px;top:423px;width:14px;height:16px;line-height:16px;font-family:'Liberation Serif',serif;font-size:11.47px;text-align:center;color:#333">0</span><span style="left:1063px;top:407.3px;width:14px;height:14px;line-height:14px;font-family:'Liberation Serif',serif;font-size:9.73px;letter-spacing:0.6px;font-weight:bold;text-align:center;color:#222">06</span><span style="left:1062px;top:423px;width:14px;height:16px;line-height:16px;font-family:'Liberation Serif',serif;font-size:11.47px;text-align:center;color:#333">0</span><span style="left:1077px;top:407.3px;width:14px;height:14px;line-height:14px;font-family:'Liberation Serif',serif;font-size:9.73px;letter-spacing:0.6px;font-weight:bold;text-align:center;color:#222">05</span><span style="left:1076px;top:423px;width:14px;height:16px;line-height:16px;font-family:'Liberation Serif',serif;font-size:11.47px;text-align:center;color:#333">0</span><span style="left:1091px;top:407.3px;width:14px;height:14px;line-height:14px;font-family:'Liberation Serif',serif;font-size:9.73px;letter-spacing:0.6px;font-weight:bold;text-align:center;color:#222">04</span><span style="left:1090px;top:423px;width:14px;height:16px;line-height:16px;font-family:'Liberation Serif',serif;font-size:11.47px;text-align:center;color:#333">0</span><span style="left:1105px;top:407.3px;width:14px;height:14px;line-height:14px;font-family:'Liberation Serif',serif;font-size:9.73px;letter-spacing:0.6px;font-weight:bold;text-align:center;color:#222">03</span><span style="left:1104px;top:423px;width:14px;height:16px;line-height:16px;font-family:'Liberation Serif',serif;font-size:11.47px;text-align:center;color:#333">0</span><span style="left:1119px;top:407.3px;width:14px;height:14px;line-height:14px;font-family:'Liberation Serif',serif;font-size:9.73px;letter-spacing:0.6px;font-weight:bold;text-align:center;color:#222">02</span><span style="left:1118px;top:423px;width:14px;height:16px;line-height:16px;font-family:'Liberation Serif',serif;font-size:11.47px;text-align:center;color:#333">0</span><span style="left:1133px;top:407.3px;width:14px;height:14px;line-height:14px;font-family:'Liberation Serif',serif;font-size:9.73px;letter-spacing:0.6px;font-weight:bold;text-align:center;color:#222">01</span><span style="left:1132px;top:423px;width:14px;height:16px;line-height:16px;font-family:'Liberation Serif',serif;font-size:11.47px;text-align:center;color:#333">0</span><span style="left:1147px;top:407.3px;width:14px;height:14px;line-height:14px;font-family:'Liberation Serif',serif;font-size:9.73px;letter-spacing:0.6px;font-weight:bold;text-align:center;color:#222">00</span><span style="left:1146px;top:423px;width:14px;height:16px;line-height:16px;font-family:'Liberation Serif',serif;font-size:11.47px;text-align:center;color:#333">0</span>
<div class="ser" style="left:715px;top:441.467px;">Opcode version: 3.9</div>
<div style="left:715px;top:462px;width:1818px;height:2px;background:#808080"></div><div class="ser" style="left:715px;top:484.133px;letter-spacing:-0.39px">PAPYRUS BYTECODE:</div>
<div class="mon" style="left:739px;top:508px">CALLMETHOD GetValue ::FPSH_Setting_BlackmailDistributionChanceToFindPics_var ::temp1 0</div>
<div class="mon" style="left:739px;top:528px">ASSIGN baseChance ::temp1</div>
<div class="mon" style="left:739px;top:548px">CAST ::temp2 0</div>
<div class="mon" style="left:739px;top:568px">CMP_EQ ::temp3 baseChance ::temp2</div>
<div class="mon" style="left:739px;top:588px">JMPF ::temp3 3</div>
<div class="mon" style="left:739px;top:608px">RETURN NULL</div>
<div class="mon" style="left:739px;top:628px">JMP 1</div>
<div class="mon" style="left:739px;top:648px">CALLMETHOD GetParentCell ::PlayerRef_var ::temp4 0</div>
<div class="mon" style="left:715px;top:668px;color:#111">==&gt;<b style="position:static">CALLMETHOD GetActorOwner ::temp4 ::temp5 0</b></div>
<div class="mon" style="left:739px;top:688px">CALLMETHOD GetActorBase ::PlayerRef_var ::temp6 0</div>
<div class="mon" style="left:739px;top:708px">CMP_EQ ::temp3 ::temp5 ::temp6</div>
<div class="mon" style="left:739px;top:728px">JMPF ::temp3 3</div>
<div class="mon" style="left:739px;top:748px">RETURN NULL</div>
<div class="mon" style="left:739px;top:768px">JMP 1</div>
<div class="mon" style="left:739px;top:788px">CALLMETHOD IsInInterior ::PlayerRef_var ::temp3 0</div>
<div class="mon" style="left:739px;top:808px">CAST ::temp9 ::temp3</div>
<div class="mon" style="left:739px;top:828px">JMPT ::temp9 4</div>
<div class="mon" style="left:739px;top:848px">CAST ::temp7 NULL</div>
<div class="mon" style="left:739px;top:868px">CMP_EQ ::temp8 akSourceContainer ::temp7</div>
<div class="mon" style="left:739px;top:888px">CAST ::temp9 ::temp8</div>
<div class="mon" style="left:739px;top:908px">CAST ::temp12 ::temp9</div>
<div style="left:705px;top:939px;width:1853px;height:1px;background:#696969"></div><div style="left:705px;top:939px;width:1px;height:460px;background:#696969"></div><div style="left:705px;top:935px;width:1855px;height:4px;background:#f6f6f6"></div><div style="left:709px;top:947px;width:1846px;height:449px;border:1px solid #8e98a4;box-shadow:1px 1px 0 #fff, inset 1px 1px 0 #fff"></div><div style="left:712px;top:946px;width:27px;height:4px;background:#f0f0f0"></div><span class="tah" style="left:714px;top:939px;height:16px;line-height:16px">Data</span><div style="left:712px;top:956px;width:1822px;height:25px;background:#fff"></div><div style="left:735px;top:956px;width:1px;height:25px;background:#e5e5e5"></div><div style="left:855px;top:956px;width:1px;height:25px;background:#e5e5e5"></div><div style="left:1695px;top:956px;width:1px;height:25px;background:#e5e5e5"></div><span class="tah" style="left:717px;top:962px;height:16px;line-height:16px">#</span><span class="tah" style="left:742px;top:962px;height:16px;line-height:16px">Type</span><span class="tah" style="left:861px;top:962px;height:16px;line-height:16px">Name</span><span class="tah" style="left:1702px;top:962px;height:16px;line-height:16px">Value</span>
<div style="left:712px;top:981px;width:1824px;height:413px;background:#fff;overflow:hidden"><span class="cell" style="left:0;top:0px;width:22px;text-align:right">0</span><span class="cell" style="left:25px;top:0px">Form</span><span class="cell" style="left:145px;top:0px">akBaseItem</span><span class="cell" style="left:985px;top:0px">REF : MiscObject: *Fallout4.esm:0000000f (000001adecce4910)</span><div class="gl" style="left:0;top:15px"></div>
<span class="cell" style="left:0;top:16px;width:22px;text-align:right">1</span><span class="cell" style="left:25px;top:16px">INTEGER</span><span class="cell" style="left:145px;top:16px">aiItemCount</span><span class="cell" style="left:985px;top:16px">INTEGER:65535</span><div class="gl" style="left:0;top:31px"></div>
<span class="cell" style="left:0;top:32px;width:22px;text-align:right">2</span><span class="cell" style="left:25px;top:32px">ObjectReference</span><span class="cell" style="left:145px;top:32px">akItemReference</span><span class="cell blue" style="left:985px;top:32px">REF : 0000000000000000 (ObjectReference)</span><div class="gl" style="left:0;top:47px"></div>
<span class="cell" style="left:0;top:48px;width:22px;text-align:right">3</span><span class="cell" style="left:25px;top:48px">ObjectReference</span><span class="cell" style="left:145px;top:48px">akSourceContainer</span><span class="cell blue" style="left:985px;top:48px">REF : 0000000000000000 (ObjectReference)</span><div class="gl" style="left:0;top:63px"></div>
<span class="cell" style="left:0;top:64px;width:22px;text-align:right">4</span><span class="cell" style="left:25px;top:64px">FLOAT</span><span class="cell" style="left:145px;top:64px">::temp1</span><span class="cell" style="left:985px;top:64px">FLOAT:0.2</span><div class="gl" style="left:0;top:79px"></div>
<span class="cell" style="left:0;top:80px;width:22px;text-align:right">5</span><span class="cell" style="left:25px;top:80px">FLOAT</span><span class="cell" style="left:145px;top:80px">::temp2</span><span class="cell" style="left:985px;top:80px">FLOAT:0.0</span><div class="gl" style="left:0;top:95px"></div>
<span class="cell" style="left:0;top:96px;width:22px;text-align:right">6</span><span class="cell" style="left:25px;top:96px">BOOLEAN</span><span class="cell" style="left:145px;top:96px">::temp3</span><span class="cell" style="left:985px;top:96px">BOOLEAN:false</span><div class="gl" style="left:0;top:111px"></div>
<span class="cell" style="left:0;top:112px;width:22px;text-align:right">7</span><span class="cell" style="left:25px;top:112px">Cell</span><span class="cell" style="left:145px;top:112px">::temp4</span><span class="cell" style="left:985px;top:112px">REF : Cell: *Fallout4.esm:0000e421 (000001adb20af520)</span><div class="gl" style="left:0;top:127px"></div>
<span class="cell" style="left:0;top:128px;width:22px;text-align:right">8</span><span class="cell" style="left:25px;top:128px">ActorBase</span><span class="cell" style="left:145px;top:128px">::temp5</span><span class="cell blue" style="left:985px;top:128px">REF : 0000000000000000 (ActorBase)</span><div class="gl" style="left:0;top:143px"></div>
<span class="cell" style="left:0;top:144px;width:22px;text-align:right">9</span><span class="cell" style="left:25px;top:144px">ActorBase</span><span class="cell" style="left:145px;top:144px">::temp6</span><span class="cell blue" style="left:985px;top:144px">REF : 0000000000000000 (ActorBase)</span><div class="gl" style="left:0;top:159px"></div>
<span class="cell" style="left:0;top:160px;width:22px;text-align:right">10</span><span class="cell" style="left:25px;top:160px">ObjectReference</span><span class="cell" style="left:145px;top:160px">::temp7</span><span class="cell blue" style="left:985px;top:160px">REF : 0000000000000000 (ObjectReference)</span><div class="gl" style="left:0;top:175px"></div>
<span class="cell" style="left:0;top:176px;width:22px;text-align:right">11</span><span class="cell" style="left:25px;top:176px">BOOLEAN</span><span class="cell" style="left:145px;top:176px">::temp8</span><span class="cell" style="left:985px;top:176px">BOOLEAN:false</span><div class="gl" style="left:0;top:191px"></div>
<span class="cell" style="left:0;top:192px;width:22px;text-align:right">12</span><span class="cell" style="left:25px;top:192px">BOOLEAN</span><span class="cell" style="left:145px;top:192px">::temp9</span><span class="cell" style="left:985px;top:192px">BOOLEAN:false</span><div class="gl" style="left:0;top:207px"></div>
<span class="cell" style="left:0;top:208px;width:22px;text-align:right">13</span><span class="cell" style="left:25px;top:208px">INTEGER</span><span class="cell" style="left:145px;top:208px">::temp10</span><span class="cell" style="left:985px;top:208px">INTEGER:0</span><div class="gl" style="left:0;top:223px"></div>
<span class="cell" style="left:0;top:224px;width:22px;text-align:right">14</span><span class="cell" style="left:25px;top:224px">BOOLEAN</span><span class="cell" style="left:145px;top:224px">::temp11</span><span class="cell" style="left:985px;top:224px">BOOLEAN:false</span><div class="gl" style="left:0;top:239px"></div>
<span class="cell" style="left:0;top:240px;width:22px;text-align:right">15</span><span class="cell" style="left:25px;top:240px">BOOLEAN</span><span class="cell" style="left:145px;top:240px">::temp12</span><span class="cell" style="left:985px;top:240px">BOOLEAN:false</span><div class="gl" style="left:0;top:255px"></div>
<span class="cell" style="left:0;top:256px;width:22px;text-align:right">16</span><span class="cell" style="left:25px;top:256px">Actor</span><span class="cell" style="left:145px;top:256px">::temp13</span><span class="cell blue" style="left:985px;top:256px">REF : 0000000000000000 (Actor)</span><div class="gl" style="left:0;top:271px"></div>
<span class="cell" style="left:0;top:272px;width:22px;text-align:right">17</span><span class="cell" style="left:25px;top:272px">Actor</span><span class="cell" style="left:145px;top:272px">::temp14</span><span class="cell blue" style="left:985px;top:272px">REF : 0000000000000000 (Actor)</span><div class="gl" style="left:0;top:287px"></div>
<span class="cell" style="left:0;top:288px;width:22px;text-align:right">18</span><span class="cell" style="left:25px;top:288px">Race</span><span class="cell" style="left:145px;top:288px">::temp15</span><span class="cell blue" style="left:985px;top:288px">REF : 0000000000000000 (Race)</span><div class="gl" style="left:0;top:303px"></div>
<span class="cell" style="left:0;top:304px;width:22px;text-align:right">19</span><span class="cell" style="left:25px;top:304px">NULL</span><span class="cell" style="left:145px;top:304px">::nonevar</span><span class="cell" style="left:985px;top:304px">NULL</span><div class="gl" style="left:0;top:319px"></div>
<span class="cell" style="left:0;top:320px;width:22px;text-align:right">20</span><span class="cell" style="left:25px;top:320px">INTEGER</span><span class="cell" style="left:145px;top:320px">::temp16</span><span class="cell" style="left:985px;top:320px">INTEGER:0</span><div class="gl" style="left:0;top:335px"></div>
<span class="cell" style="left:0;top:336px;width:22px;text-align:right">21</span><span class="cell" style="left:25px;top:336px">INTEGER</span><span class="cell" style="left:145px;top:336px">::temp17</span><span class="cell" style="left:985px;top:336px">INTEGER:0</span><div class="gl" style="left:0;top:351px"></div>
<span class="cell" style="left:0;top:352px;width:22px;text-align:right">22</span><span class="cell" style="left:25px;top:352px">INTEGER</span><span class="cell" style="left:145px;top:352px">::temp18</span><span class="cell" style="left:985px;top:352px">INTEGER:0</span><div class="gl" style="left:0;top:367px"></div>
<span class="cell" style="left:0;top:368px;width:22px;text-align:right">23</span><span class="cell" style="left:25px;top:368px">INTEGER</span><span class="cell" style="left:145px;top:368px">::temp19</span><span class="cell" style="left:985px;top:368px">INTEGER:0</span><div class="gl" style="left:0;top:383px"></div>
<span class="cell" style="left:0;top:384px;width:22px;text-align:right">24</span><span class="cell" style="left:25px;top:384px">FLOAT</span><span class="cell" style="left:145px;top:384px">::temp22</span><span class="cell" style="left:985px;top:384px">FLOAT:0.0</span><div class="gl" style="left:0;top:399px"></div>
<span class="cell" style="left:0;top:400px;width:22px;text-align:right">25</span><span class="cell" style="left:25px;top:400px">FLOAT</span><span class="cell" style="left:145px;top:400px">::temp26</span><span class="cell" style="left:985px;top:400px">FLOAT:0.0</span><div class="gl" style="left:0;top:415px"></div>
<div style="left:24px;top:0;width:1px;height:416px;background:#848484"></div><div style="left:144px;top:0;width:1px;height:416px;background:#848484"></div><div style="left:984px;top:0;width:1px;height:416px;background:#848484"></div><div style="left:1823px;top:0;width:1px;height:416px;background:#848484"></div></div>
<div style="left:2537px;top:981px;width:17px;height:413px;background:#f0f0f0"><svg style="position:absolute;left:2.8px;top:6.13px;width:9.33px;height:6.67px" viewBox="0 0 7 5"><path d="M0.7 4L3.5 1.1L6.3 4" stroke="#505050" stroke-width="1.1" fill="none"/></svg><div style="left:1px;top:17px;width:14px;height:211px;background:#cdcdcd"></div><svg style="position:absolute;left:2.8px;top:401.33px;width:9.33px;height:6.67px" viewBox="0 0 7 5"><path d="M0.7 1L3.5 3.9L6.3 1" stroke="#505050" stroke-width="1.1" fill="none"/></svg></div>
<div style="left:0;top:1399px;width:2560px;height:1px;background:#fbfbfb"></div><div id="taskbar" style="left:0;top:1400px;width:2560px;height:40px;background:#091f2e"><div style="left:296px;top:0;width:48px;height:40px;background:#054d87"></div><div style="left:55px;top:37px;width:40px;height:3px;background:#9fd0f5"></div><div style="left:104px;top:37px;width:40px;height:3px;background:#9fd0f5"></div><div style="left:153px;top:37px;width:40px;height:3px;background:#9fd0f5"></div><div style="left:202px;top:37px;width:40px;height:3px;background:#9fd0f5"></div><div style="left:251px;top:37px;width:31px;height:3px;background:#9fd0f5"></div><div style="left:282px;top:37px;width:9px;height:3px;background:#5b7f9c"></div><div style="left:296px;top:37px;width:48px;height:3px;background:#9fd0f5"></div><svg style="position:absolute;left:16px;top:12px;width:16.53px;height:16.27px" viewBox="0 0 12.4 12.2"><path d="M0 1.7L5 1V5.8H0ZM5.7 0.9L12.4 0V5.8H5.7ZM0 6.5H5V11.3L0 10.6ZM5.7 6.5H12.4V12.2L5.7 11.3Z" fill="#fff"/></svg><svg style="position:absolute;left:63.53px;top:7.73px;width:23.33px;height:23.33px" viewBox="0 0 17.5 17.5"><defs><radialGradient id="ff1" gradientUnits="userSpaceOnUse" cx="13.6" cy="2.6" r="16.5"><stop offset="0" stop-color="#fff24a"/><stop offset="0.3" stop-color="#ffc22e"/><stop offset="0.55" stop-color="#ff8326"/><stop offset="0.8" stop-color="#ff3a4a"/><stop offset="1" stop-color="#f02090"/></radialGradient><linearGradient id="ff2" x1="0" y1="0" x2="0" y2="1"><stop offset="0" stop-color="#a54cf5"/><stop offset="1" stop-color="#5a45e6"/></linearGradient></defs><path d="M10.75 0.2C11.6 1.9 13 2.6 14.2 3.7C16.1 5.4 17.5 7.2 17.5 9.4C17.5 13.9 13.6 17.5 8.75 17.5C3.9 17.5 0 13.9 0 9.5C0 7 0.8 5 2.2 3.1C2.5 3.9 3 4.5 3.65 4.75C3.9 4.2 4.3 3.7 4.9 3.45C5.3 4.3 6 4.9 6.9 5.1C7.6 4.4 8.1 3.5 8.4 2.55C9.2 2 10.2 1.2 10.75 0.2Z" fill="url(#ff1)"/><circle cx="8.9" cy="9.7" r="3.5" fill="url(#ff2)"/><path d="M3.2 6.1C4.6 5.6 6.6 6.2 8.5 7.5C7.4 7.7 6.9 8.3 6.9 8.9C6.2 9 5.5 9.6 5.2 10.4C4 9.6 3.2 8 3.2 6.1Z" fill="#ff9a1e"/><path d="M9.6 5.6C10.6 5.4 11.4 5.7 11.8 6.3C11.2 6.3 10.6 6.5 10.2 6.9Z" fill="#c23ee0"/></svg><svg style="position:absolute;left:112.87px;top:9.93px;width:20.93px;height:20.93px" viewBox="0 0 15.7 15.7"><defs><linearGradient id="st1" x1="0" y1="0" x2="0.25" y2="1"><stop offset="0" stop-color="#1c1a44"/><stop offset="0.5" stop-color="#123f70"/><stop offset="1" stop-color="#1a95cf"/></linearGradient></defs><circle cx="7.85" cy="7.85" r="7.85" fill="url(#st1)"/><circle cx="11.1" cy="4.9" r="3.3" fill="#f1f1f6"/><circle cx="11.1" cy="4.9" r="2" fill="#d5d7e4"/><circle cx="11.2" cy="4.8" r="1.1" fill="#fff"/><path d="M0.1 6.6L4.9 8.6L8.2 5.4L10.8 7.9L7.4 11.1C7.3 12.6 6 13.5 4.8 13.2C3.8 13 3.1 12.2 3 11.3L0.2 10.1C0 9 0 7.7 0.1 6.6Z" fill="#fff"/></svg><svg style="position:absolute;left:161.2px;top:8px;width:23.87px;height:23.87px" viewBox="0 0 17.9 17.9"><circle cx="8.95" cy="8.95" r="8.95" fill="#5965f2"/><path d="M4.3 5.5C5.2 5 6.1 4.75 6.9 4.65L7.25 5.3C8.4 5.12 9.5 5.12 10.65 5.3L11 4.65C11.8 4.75 12.7 5 13.6 5.5C14.75 7.3 15.2 9.5 14.95 11.7C14 12.45 13 12.85 12 13.05L11.45 12.1C11.85 12 12.2 11.8 12.55 11.55C10.3 12.6 7.6 12.6 5.35 11.55C5.7 11.8 6.05 12 6.45 12.1L5.9 13.05C4.9 12.85 3.9 12.45 2.95 11.7C2.7 9.5 3.15 7.3 4.3 5.5Z" fill="#fff"/><ellipse cx="6.95" cy="9.1" rx="1.05" ry="1.2" fill="#5965f2"/><ellipse cx="10.95" cy="9.1" rx="1.05" ry="1.2" fill="#5965f2"/></svg><svg style="position:absolute;left:210.53px;top:8.67px;width:25.6px;height:26.13px" viewBox="0 0 19.2 19.6"><defs><linearGradient id="tg1" x1="0" y1="0" x2="0" y2="1"><stop offset="0" stop-color="#36aee4"/><stop offset="1" stop-color="#1d93cc"/></linearGradient></defs><circle cx="8.4" cy="8.45" r="8.4" fill="url(#tg1)"/><path d="M3.5 9.1L11.8 5.5C12.3 5.3 12.5 5.6 12.35 6.2L11.3 11.6C11.2 12.1 10.85 12.2 10.5 11.95L8.6 10.5L7.6 11.45C7.45 11.6 7.25 11.55 7.25 11.3L7.4 9.7L10.9 6.7L6.3 9.4L3.7 9.6C3.3 9.6 3.2 9.25 3.5 9.1Z" fill="#fff"/><circle cx="13.15" cy="13.7" r="5.8" fill="#8c8c8c"/><text x="13.05" y="16.75" font-family="Liberation Sans, sans-serif" font-weight="bold" font-size="8.5" fill="#fff" text-anchor="middle" letter-spacing="-0.1">19</text></svg><svg style="position:absolute;left:259.87px;top:10.4px;width:21.73px;height:18.93px" viewBox="0 0 16.3 14.2"><defs><linearGradient id="ex1" x1="0" y1="0" x2="0" y2="1"><stop offset="0" stop-color="#ffdc72"/><stop offset="1" stop-color="#ffc53a"/></linearGradient></defs><path d="M0 0.5C0 0.2 0.2 0 0.5 0H6.6L7.6 1.2H15.8C16.1 1.2 16.3 1.4 16.3 1.7V13.3H0Z" fill="#eaa900"/><path d="M0 2.7H7L8 1.3H16.3V13.3H0Z" fill="url(#ex1)"/><path d="M3.3 14.2V8.7C3.3 8.2 3.6 7.9 4.1 7.9H12.3C12.8 7.9 13.1 8.2 13.1 8.7V14.2H10.75V10.45H5.85V14.2Z" fill="#3b9be9"/></svg><svg style="position:absolute;left:308.27px;top:10.93px;width:23.6px;height:18px" viewBox="0 0 17.7 13.5"><rect width="17.7" height="13.5" fill="#33261a"/><circle cx="5.9" cy="6.75" r="5.6" fill="#7b5722"/><circle cx="5.9" cy="6.75" r="3.9" fill="#86602a"/><circle cx="5.9" cy="6.75" r="1.7" fill="#cfc4a4"/><circle cx="5.9" cy="6.75" r="0.5" fill="#8a7a5a"/><path d="M0.4 2.5C1.4 1 3 0.4 5 0.4" stroke="#b7a98c" stroke-width="0.5" fill="none"/><path d="M0.5 11C1.6 12.6 3.2 13.1 5 13.1" stroke="#b7a98c" stroke-width="0.5" fill="none"/><rect x="12.2" y="0.6" width="5" height="12.3" fill="#3f3022"/><rect x="12.8" y="1.4" width="3.6" height="1.3" fill="#8f7f6a"/><rect x="13.2" y="4.4" width="3" height="1.5" fill="#a4805a"/><rect x="12.6" y="7.2" width="2.4" height="1.2" fill="#c8b890"/><rect x="12.6" y="10.4" width="2.2" height="1.3" fill="#e0dccc"/><rect x="15.6" y="6.6" width="1.3" height="5.6" fill="#8a7a62"/></svg><svg style="position:absolute;left:2340px;top:15.47px;width:14.67px;height:9.33px" viewBox="0 0 11 7"><path d="M0.9 5.8L5.3 1.2L9.7 5.8" stroke="#fff" stroke-width="1.05" fill="none"/></svg><svg style="position:absolute;left:2362.13px;top:12.8px;width:17.33px;height:15.2px" viewBox="0 0 13 11.4"><g stroke="#fff" stroke-width="0.8" fill="none"><rect x="3.6" y="0.9" width="8.6" height="6.2"/><path d="M7.9 7.1V10.2M5.4 10.4H10.4"/><rect x="0.5" y="0.5" width="2.6" height="3.4" fill="#091f2e"/><path d="M0.5 2.2H3.1M1.8 3.9V8.6H5"/></g></svg><svg style="position:absolute;left:2385.87px;top:13.07px;width:17.87px;height:13.87px" viewBox="0 0 13.4 10.4"><g stroke="#fff" stroke-width="0.8" fill="none"><path d="M0.5 3.6H2.6L5.4 0.9V9.5L2.6 6.8H0.5Z"/><path d="M7 3.6C7.7 4.4 7.7 6 7 6.8" /><path d="M8.8 2.3C10.1 3.8 10.1 6.6 8.8 8.1" stroke-opacity="0.75"/><path d="M10.7 1C12.7 3.3 12.7 7.1 10.7 9.4" stroke-opacity="0.45"/></g></svg><span class="seg" style="left:2414px;top:11px;height:17px;line-height:17px;font-size:11.73px;color:#fff;letter-spacing:-0.73px">РУС</span><span class="seg" style="left:2437px;top:2px;width:75px;text-align:center;height:17px;line-height:17px;font-size:12px;color:#fff;letter-spacing:-0.27px">9:26 PM</span><span class="seg" style="left:2437px;top:21px;width:75px;text-align:center;height:17px;line-height:17px;font-size:12px;color:#fff;letter-spacing:-0.27px">12/6/2024</span><svg style="position:absolute;left:2518.13px;top:11.73px;width:17.87px;height:17.33px" viewBox="0 0 13.4 13"><path d="M0.6 0.6H12.8V9.4H8.6L6.7 11.6L4.8 9.4H0.6Z" stroke="#fff" stroke-width="0.85" fill="none"/></svg><div style="left:2556px;top:0;width:1px;height:40px;background:#8a949c"></div></div>
</div></body></html>
